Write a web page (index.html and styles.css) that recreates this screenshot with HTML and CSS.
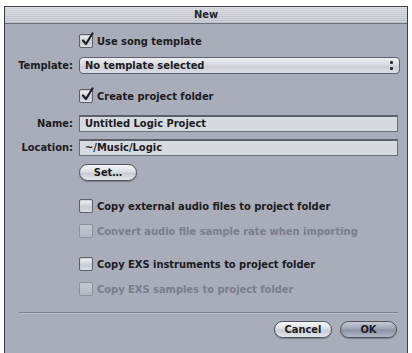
FILE: index.html
```html
<!DOCTYPE html>
<html>
<head>
<meta charset="utf-8">
<link rel="stylesheet" href="styles.css">
</head>
<body>
<div class="window">
  <div class="titlebar">New</div>
  <div class="content">
    <div class="row check-row r1">
      <span class="label"></span>
      <label class="check"><span class="box checked"><svg viewBox="0 0 14 16" width="14" height="16"><path d="M3 8.5 L6 12 L12.5 1.5" fill="none" stroke="#1d1f26" stroke-width="2.2" stroke-linecap="round" stroke-linejoin="round"/></svg></span><span class="text">Use song template</span></label>
    </div>
    <div class="row r2">
      <span class="label">Template:</span>
      <div class="popup"><span>No template selected</span><span class="arrows"><i></i><i></i></span></div>
    </div>
    <div class="row check-row r3">
      <span class="label"></span>
      <label class="check"><span class="box checked"><svg viewBox="0 0 14 16" width="14" height="16"><path d="M3 8.5 L6 12 L12.5 1.5" fill="none" stroke="#1d1f26" stroke-width="2.2" stroke-linecap="round" stroke-linejoin="round"/></svg></span><span class="text">Create project folder</span></label>
    </div>
    <div class="row r4">
      <span class="label">Name:</span>
      <div class="field">Untitled Logic Project</div>
    </div>
    <div class="row r5">
      <span class="label">Location:</span>
      <div class="field">~/Music/Logic</div>
    </div>
    <div class="row r6">
      <span class="label"></span>
      <button class="btn set">Set…</button>
    </div>
    <div class="row check-row r7">
      <span class="label"></span>
      <label class="check"><span class="box"></span><span class="text">Copy external audio files to project folder</span></label>
    </div>
    <div class="row check-row r8 disabled">
      <span class="label"></span>
      <label class="check"><span class="box"></span><span class="text">Convert audio file sample rate when importing</span></label>
    </div>
    <div class="row check-row r9">
      <span class="label"></span>
      <label class="check"><span class="box"></span><span class="text">Copy EXS instruments to project folder</span></label>
    </div>
    <div class="row check-row r10 disabled">
      <span class="label"></span>
      <label class="check"><span class="box"></span><span class="text">Copy EXS samples to project folder</span></label>
    </div>
    <div class="separator"></div>
    <div class="buttons">
      <button class="btn cancel">Cancel</button>
      <button class="btn ok">OK</button>
    </div>
  </div>
</div>
</body>
</html>
```

FILE: styles.css
```css
html, body {
  margin: 0;
  padding: 0;
  background: #ffffff;
  height: 353px;
  overflow: hidden;
}
body {
  font-family: "DejaVu Sans Condensed", "DejaVu Sans", "Liberation Sans", sans-serif;
  font-weight: bold;
  font-size: 11px;
  color: #1b1c22;
}
.window {
  margin: 6px 0 0 4px;
  width: 402px;
  height: 360px;
  border: 1px solid #3c3e46;
  border-bottom: none;
  background: #a9acb9;
}
.titlebar {
  height: 16px;
  line-height: 16px;
  text-align: center;
  font-size: 11px;
  color: #26272d;
  border-bottom: 1px solid #6c6f7c;
  background:
    repeating-linear-gradient(to bottom, rgba(255,255,255,0.18) 0 1px, rgba(0,0,0,0.03) 1px 2px),
    linear-gradient(to bottom, #d6d8df, #c3c6cf);
}
.content {
  display: flex;
  flex-direction: column;
}
.row {
  display: flex;
  align-items: center;
}
.label {
  width: 68px;
  margin-right: 6px;
  text-align: right;
  flex: none;
}
.check-row { height: 14px; }
.r1 { margin-top: 10px; }
.r2 { margin-top: 9px; height: 17px; }
.r3 { margin-top: 15px; }
.r4 { margin-top: 12px; height: 17px; }
.r5 { margin-top: 7px; height: 17px; }
.r6 { margin-top: 8px; height: 17px; }
.r7 { margin-top: 18px; }
.r8 { margin-top: 11px; }
.r9 { margin-top: 19px; }
.r10 { margin-top: 11px; }

.check {
  display: flex;
  align-items: center;
  position: relative;
}
.box {
  width: 12px;
  height: 12px;
  border: 1px solid #5d606b;
  border-radius: 2px;
  background: linear-gradient(to bottom, #f4f5f8, #c9cbd3 60%, #dcdee4);
  box-shadow: inset 0 1px 1px rgba(0,0,0,0.15);
  position: relative;
  flex: none;
}
.box svg {
  position: absolute;
  left: 0px;
  top: -3px;
}
.check .text { margin-left: 4px; }
.disabled .box {
  border-color: #8e919c;
  background: linear-gradient(to bottom, #c6c8d0, #b5b8c3);
  box-shadow: none;
}
.disabled .text { color: #7b7e8b; }

.popup {
  height: 15px;
  border: 1px solid #5f626d;
  border-radius: 4px;
  background: linear-gradient(to bottom, #eceef2, #d6d8e0 50%, #c9ccd5 51%, #dcdee5);
  display: flex;
  align-items: center;
  justify-content: space-between;
  padding: 0 6px 0 5px;
  box-sizing: content-box;
  width: 308px;
}
.arrows {
  display: flex;
  flex-direction: column;
  gap: 3px;
}
.arrows i {
  display: block;
  width: 3px;
  height: 3px;
  background: #2a2b31;
  border-radius: 1px;
}
.field {
  width: 312px;
  border: 1px solid #6b6e79;
  border-top: 2px solid #5d606b;
  height: 14px;
  line-height: 14px;
  background: #d8dae2;
  padding-left: 5px;
  box-sizing: content-box;
}
.btn {
  font-family: inherit;
  font-weight: bold;
  font-size: 11px;
  color: #1b1c22;
  height: 17px;
  padding: 0;
  border: 1px solid #4f525c;
  border-radius: 9px;
  background: linear-gradient(to bottom, #f6f7f9, #dcdee4 45%, #c8cbd3 55%, #e4e6eb);
  box-shadow: 0 1px 1px rgba(0,0,0,0.25);
}
.set { width: 58px; }
.separator {
  margin: 16px 9px 0 14px;
  height: 1px;
  background: #7f828e;
  border-bottom: 1px solid #bcbfca;
}
.buttons {
  display: flex;
  justify-content: flex-end;
  gap: 8px;
  margin: 7px 10px 0 0;
}
.cancel { width: 58px; }
.ok {
  width: 57px;
  background: linear-gradient(to bottom, #c6cad6, #9ea4b4 45%, #8a91a3 55%, #b3b9c7);
}
```
